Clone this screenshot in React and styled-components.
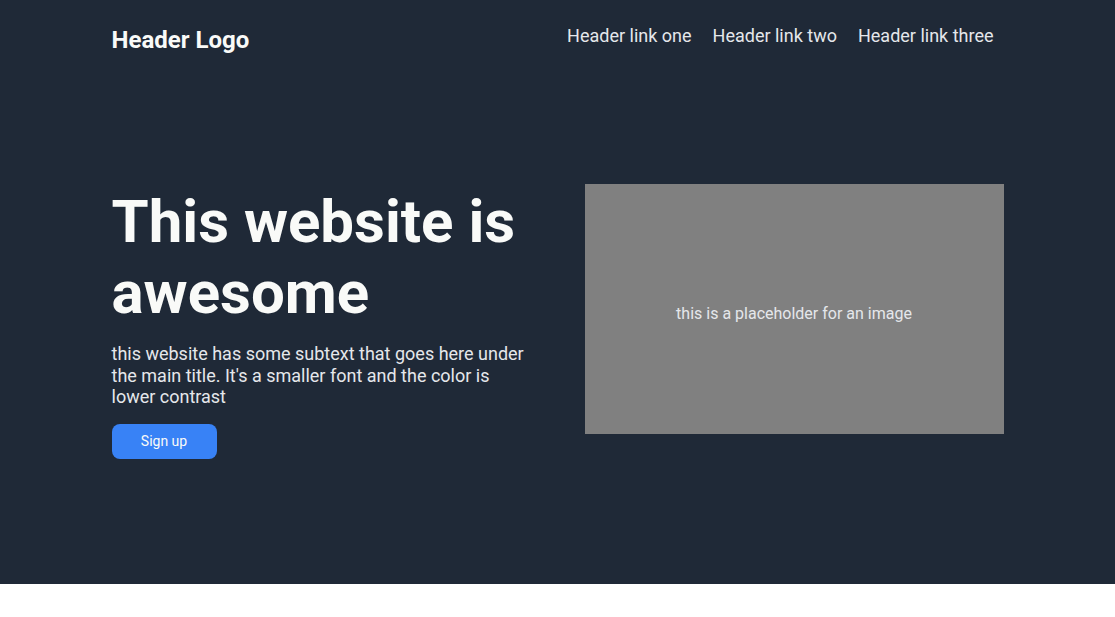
import React from "react";
import styled, { createGlobalStyle } from "styled-components";

const Global = createGlobalStyle`
  html, body { margin: 0; padding: 0; background: #ffffff; }
  body { font-family: Roboto, "Liberation Sans", sans-serif; }
  * { box-sizing: border-box; }
`;

const Top = styled.div`
  background: #1f2937;
  height: 584px;
  display: flex;
  flex-direction: column;
`;

const Header = styled.header`
  width: 892px;
  margin: 0 auto;
  padding-top: 25px;
  display: flex;
  justify-content: space-between;
  align-items: flex-start;
`;

const Logo = styled.div`
  font-size: 24px;
  line-height: 28px;
  padding-top: 1px;
  font-weight: 700;
  color: #f9faf8;
`;

const Nav = styled.nav`
  display: flex;
  gap: 21px;
  padding-right: 10px;
`;

const NavLink = styled.a`
  font-size: 18px;
  color: #e5e7eb;
  text-decoration: none;
  line-height: 21px;
`;

const Hero = styled.section`
  width: 892px;
  margin: 0 auto;
  padding-top: 129px;
  display: flex;
  justify-content: space-between;
  align-items: flex-start;
`;

const Left = styled.div`
  width: 420px;
  display: flex;
  flex-direction: column;
`;

const Title = styled.h1`
  margin: 0;
  padding-top: 3px;
  font-size: 60px;
  line-height: 71px;
  font-weight: 700;
  color: #f9faf8;
`;

const Sub = styled.p`
  margin: 15px 0 0;
  font-size: 18px;
  line-height: 21.5px;
  color: #e5e7eb;
`;

const Button = styled.button`
  margin-top: 16px;
  width: 105px;
  height: 35px;
  border: none;
  border-radius: 8px;
  background: #3882f6;
  color: #f9faf8;
  font-family: Roboto, "Liberation Sans", sans-serif;
  font-size: 14px;
  cursor: pointer;
`;

const Placeholder = styled.div`
  width: 419px;
  height: 250px;
  margin-top: 1px;
  padding-top: 8px;
  background: #808080;
  color: #e5e7eb;
  font-size: 16px;
  display: flex;
  align-items: center;
  justify-content: center;
`;

export default function App() {
  return (
    <>
      <Global />
      <Top>
        <Header>
          <Logo>Header Logo</Logo>
          <Nav>
            <NavLink href="#">Header link one</NavLink>
            <NavLink href="#">Header link two</NavLink>
            <NavLink href="#">Header link three</NavLink>
          </Nav>
        </Header>
        <Hero>
          <Left>
            <Title>This website is awesome</Title>
            <Sub>
              this website has some subtext that goes here under the main title.
              It's a smaller font and the color is lower contrast
            </Sub>
            <Button>Sign up</Button>
          </Left>
          <Placeholder>this is a placeholder for an image</Placeholder>
        </Hero>
      </Top>
    </>
  );
}
